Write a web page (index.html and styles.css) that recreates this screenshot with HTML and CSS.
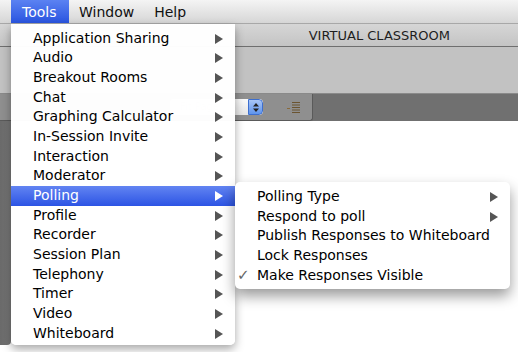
FILE: index.html
```html
<!DOCTYPE html>
<html>
<head>
<meta charset="utf-8">
<link rel="stylesheet" href="styles.css">
</head>
<body>
<div class="screen">
  <div class="menubar">
    <span class="mb-item mb-apple"></span>
    <span class="mb-item mb-active">Tools</span>
    <span class="mb-item">Window</span>
    <span class="mb-item">Help</span>
  </div>
  <div class="titlebar"><span class="title">VIRTUAL CLASSROOM</span></div>
  <div class="toolbar"></div>
  <div class="darkbar">
    <div class="panel">
      <div class="select"><span class="select-text">Fit Page</span><span class="stepper"><svg width="8" height="11" viewBox="0 0 8 11"><path d="M4 1 L7 4.5 H1 Z M4 10 L7 6.5 H1 Z" fill="#222"/></svg></span></div>
      <svg class="listicon" width="14" height="12" viewBox="0 0 14 12"><path d="M0 7.5h3" stroke="#8a6a3a" stroke-width="1"/><path d="M5 1.5h8M5 4h8M5 6.5h8M5 9h8M5 11.5h8" stroke="#6b5430" stroke-width="1"/></svg>
    </div>
  </div>
  <div class="content">
    <div class="strip"></div>
    <div class="page"></div>
  </div>
  <div class="bottom"></div>

  <div class="menu">
    <div class="mi">Application Sharing<span class="arr"></span></div>
    <div class="mi">Audio<span class="arr"></span></div>
    <div class="mi">Breakout Rooms<span class="arr"></span></div>
    <div class="mi">Chat<span class="arr"></span></div>
    <div class="mi">Graphing Calculator<span class="arr"></span></div>
    <div class="mi">In-Session Invite<span class="arr"></span></div>
    <div class="mi">Interaction<span class="arr"></span></div>
    <div class="mi">Moderator<span class="arr"></span></div>
    <div class="mi mi-sel">Polling<span class="arr"></span></div>
    <div class="mi">Profile<span class="arr"></span></div>
    <div class="mi">Recorder<span class="arr"></span></div>
    <div class="mi">Session Plan<span class="arr"></span></div>
    <div class="mi">Telephony<span class="arr"></span></div>
    <div class="mi">Timer<span class="arr"></span></div>
    <div class="mi">Video<span class="arr"></span></div>
    <div class="mi">Whiteboard<span class="arr"></span></div>
  </div>

  <div class="submenu">
    <div class="mi">Polling Type<span class="arr"></span></div>
    <div class="mi">Respond to poll<span class="arr"></span></div>
    <div class="mi">Publish Responses to Whiteboard</div>
    <div class="mi">Lock Responses</div>
    <div class="mi"><span class="check">✓</span>Make Responses Visible</div>
  </div>
</div>
</body>
</html>
```
FILE: styles.css
```css
* { box-sizing: border-box; }
html, body { margin: 0; padding: 0; }
body {
  width: 518px;
  height: 352px;
  overflow: hidden;
  background: #fff;
  font-family: "DejaVu Sans", "Liberation Sans", sans-serif;
}
.screen {
  position: relative;
  width: 518px;
  height: 352px;
  display: flex;
  flex-direction: column;
  overflow: hidden;
}
.menubar {
  height: 24px;
  flex: none;
  display: flex;
  align-items: stretch;
  background: linear-gradient(#f4f4f4, #e2e2e2 60%, #d6d6d6);
  border-bottom: 1px solid #a8a8a8;
  font-size: 14px;
  color: #111;
}
.mb-item {
  display: flex;
  align-items: center;
  padding: 0 10px;
}
.mb-apple { width: 11px; padding: 0; }
.mb-active {
  background: linear-gradient(#5b82f2, #2a55e0);
  color: #fff;
  padding: 0 11px;
  width: 58px;
}
.titlebar {
  height: 23px;
  flex: none;
  background: linear-gradient(#d6d6d6, #c4c4c4);
  border-bottom: 1px solid #6f6f6f;
  display: flex;
  align-items: center;
  justify-content: flex-end;
  padding-right: 68px;
}
.title {
  font-size: 13px;
  color: #1e1e1e;
}
.toolbar {
  height: 47px;
  flex: none;
  background: #c2c2c2;
  border-bottom: 1px solid #8a8a8a;
}
.darkbar {
  height: 27px;
  flex: none;
  background: #707070;
  display: flex;
}
.panel {
  width: 313px;
  background: #8f8f8f;
  border-right: 1px solid #5a5a5a;
  border-bottom: 1px solid #5a5a5a;
  border-bottom-right-radius: 3px;
  display: flex;
  align-items: center;
  padding-left: 170px;
}
.select {
  width: 93px;
  height: 16px;
  background: linear-gradient(#fafafa, #e4e4e4);
  border-radius: 4px;
  display: flex;
  justify-content: space-between;
  overflow: hidden;
  font-size: 10px;
  color: #ccc;
}
.select-text { padding-left: 10px; line-height: 16px; }
.stepper {
  width: 15px;
  background: linear-gradient(#a9c6f7, #5f94ec);
  border: 1px solid #3d6fcf;
  border-radius: 0 4px 4px 0;
  display: flex;
  align-items: center;
  justify-content: center;
}
.listicon { margin-left: 24px; }
.content {
  flex: 1;
  display: flex;
}
.strip {
  width: 11px;
  background: linear-gradient(90deg, #6a6a6a, #777);
  border-bottom-right-radius: 4px;
}
.page { flex: 1; background: #fff; }
.bottom { height: 7px; flex: none; background: #fff; }

.menu {
  position: absolute;
  left: 11px;
  top: 24px;
  width: 224px;
  padding: 4.5px 0 1px;
  background: rgba(255,255,255,0.98);
  border-radius: 0 0 5px 5px;
  box-shadow: 0 4px 10px rgba(0,0,0,0.35);
  font-size: 14px;
  color: #000;
}
.mi {
  position: relative;
  height: 19.7px;
  line-height: 19.7px;
  padding-left: 22px;
  white-space: nowrap;
}
.mi-sel {
  background: linear-gradient(#6284f2, #2c54e4);
  color: #fff;
}
.arr {
  position: absolute;
  right: 12px;
  top: 5px;
  width: 0;
  height: 0;
  border-top: 5px solid transparent;
  border-bottom: 5px solid transparent;
  border-left: 8px solid #555;
}
.mi-sel .arr { border-left-color: #fff; }
.submenu {
  position: absolute;
  left: 235px;
  top: 182px;
  width: 275px;
  padding: 5px 0 4px;
  background: #fff;
  border-radius: 5px;
  box-shadow: 0 7px 14px rgba(0,0,0,0.4);
  font-size: 14px;
  color: #000;
}
.submenu .arr { right: 12px; }
.check {
  position: absolute;
  left: 2px;
  color: #666;
  font-size: 15px;
}
```
